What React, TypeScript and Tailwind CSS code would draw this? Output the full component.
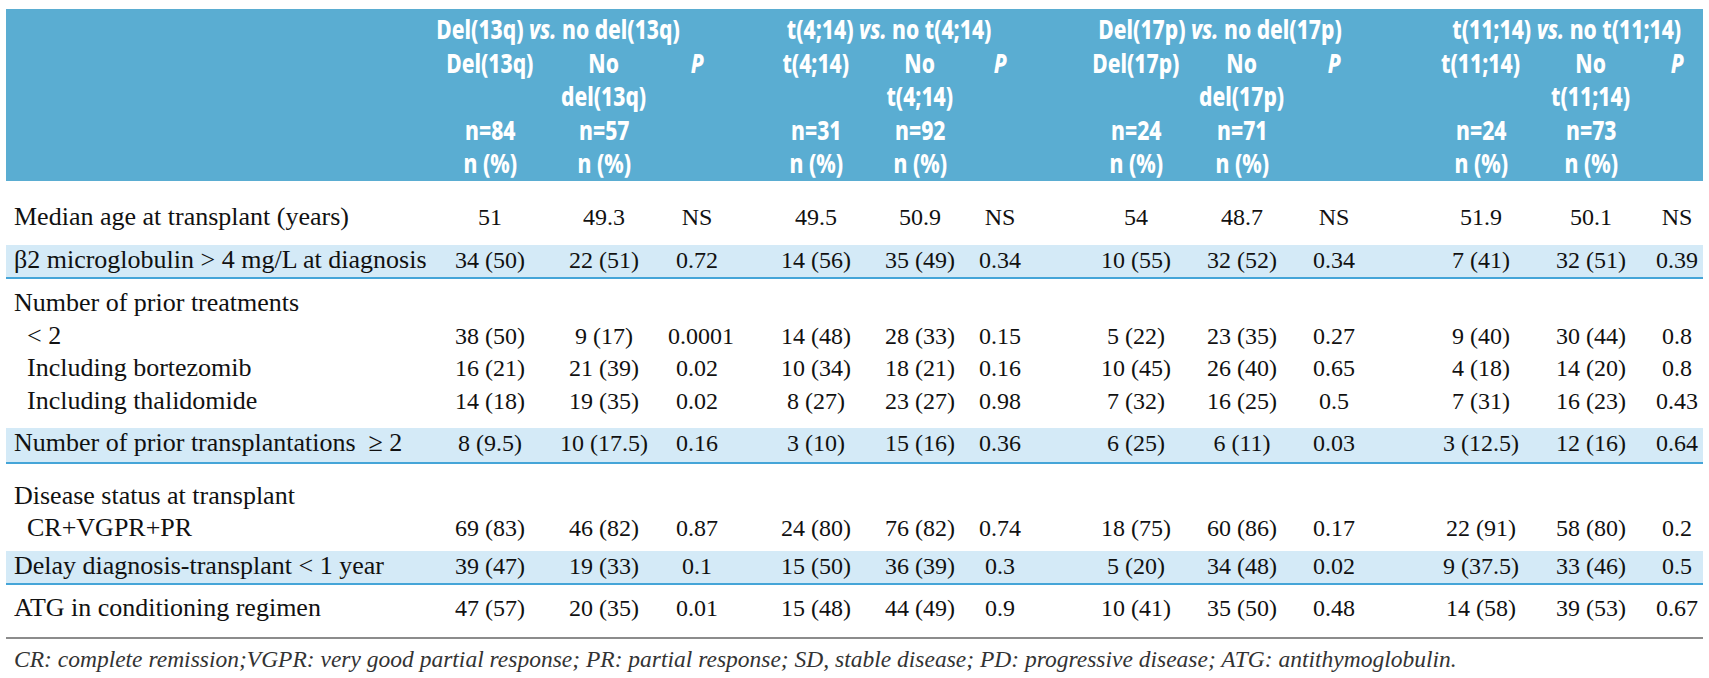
import React from "react";

const cols =
  "grid grid-cols-[434px_100px_128px_58px_40px_100px_108px_52px_60px_100px_112px_72px_61px_100px_120px_52px]";

const groups = [
  { left: "Del(13q)", right: "no del(13q)", a: "Del(13q)", b: "del(13q)", na: "n=84", nb: "n=57", pad: "pr-[50px]" },
  { left: "t(4;14)", right: "no t(4;14)", a: "t(4;14)", b: "t(4;14)", na: "n=31", nb: "n=92", pad: "pr-[14px]" },
  { left: "Del(17p)", right: "no del(17p)", a: "Del(17p)", b: "del(17p)", na: "n=24", nb: "n=71", pad: "pr-[16px]" },
  { left: "t(11;14)", right: "no t(11;14)", a: "t(11;14)", b: "t(11;14)", na: "n=24", nb: "n=73", pad: "pr-0" },
];

type LineProps = { label: string; values?: string[]; indent?: boolean };

function Line({ label, values, indent }: LineProps) {
  return (
    <div className={cols}>
      <div className={indent ? "pl-[21px] text-[26px] whitespace-pre" : "pl-[8px] text-[26px] whitespace-pre"}>
        {label}
      </div>
      {[0, 1, 2, 3].map((g) => (
        <React.Fragment key={g}>
          {g > 0 && <div />}
          {[0, 1, 2].map((i) => (
            <div key={i} className="text-center text-[24px] whitespace-nowrap">
              {values ? values[g * 3 + i] : ""}
            </div>
          ))}
        </React.Fragment>
      ))}
    </div>
  );
}

// narrow bold header text
function H({ children }: { children: React.ReactNode }) {
  return <span className="inline-block whitespace-nowrap scale-x-[0.78]">{children}</span>;
}

function Header() {
  return (
    <div className="bg-[#5aadd2] text-white font-extrabold font-['Noto_Sans',sans-serif] text-[27px] leading-[33.5px] h-[172px] pt-[3px]">
      {/* group titles */}
      <div className={cols}>
        <div />
        {groups.map((g, i) => (
          <React.Fragment key={i}>
            {i > 0 && <div />}
            <div className={`col-span-3 flex justify-center ${g.pad}`}>
              <H>
                {g.left} <i>vs.</i> {g.right}
              </H>
            </div>
          </React.Fragment>
        ))}
      </div>
      {/* sub columns */}
      <div className={cols}>
        <div />
        {groups.map((g, i) => (
          <React.Fragment key={i}>
            {i > 0 && <div />}
            <div className="flex flex-col items-center">
              <H>{g.a}</H>
              <H>&nbsp;</H>
              <H>{g.na}</H>
              <H>n (%)</H>
            </div>
            <div className="flex flex-col items-center">
              <H>No</H>
              <H>{g.b}</H>
              <H>{g.nb}</H>
              <H>n (%)</H>
            </div>
            <div className="flex justify-center italic">
              <H>P</H>
            </div>
          </React.Fragment>
        ))}
      </div>
    </div>
  );
}

export default function App() {
  return (
    <div className="w-[1709px] h-[678px] bg-white pl-[6px] pt-[9px] font-['Liberation_Serif',serif] text-[#111]">
      <div className="w-[1697px]">
        <Header />

        {/* median age */}
        <div className="pt-[20px] pb-[12px] leading-[32px]">
          <Line
            label="Median age at transplant (years)"
            values={["51", "49.3", "NS", "49.5", "50.9", "NS", "54", "48.7", "NS", "51.9", "50.1", "NS"]}
          />
        </div>

        <div className="bg-[#d4eaf7] border-b-2 border-[#45a5d8] pt-[1px] pb-[3px] leading-[28px]">
          <Line
            label="β2 microglobulin > 4 mg/L at diagnosis"
            values={["34 (50)", "22 (51)", "0.72", "14 (56)", "35 (49)", "0.34", "10 (55)", "32 (52)", "0.34", "7 (41)", "32 (51)", "0.39"]}
          />
        </div>

        <div className="pt-[8px] pb-[11px] leading-[32.5px]">
          <Line label="Number of prior treatments" />
          <Line
            indent
            label="< 2"
            values={["38 (50)", "9 (17)", "0.0001", "14 (48)", "28 (33)", "0.15", "5 (22)", "23 (35)", "0.27", "9 (40)", "30 (44)", "0.8"]}
          />
          <Line
            indent
            label="Including bortezomib"
            values={["16 (21)", "21 (39)", "0.02", "10 (34)", "18 (21)", "0.16", "10 (45)", "26 (40)", "0.65", "4 (18)", "14 (20)", "0.8"]}
          />
          <Line
            indent
            label="Including thalidomide"
            values={["14 (18)", "19 (35)", "0.02", "8 (27)", "23 (27)", "0.98", "7 (32)", "16 (25)", "0.5", "7 (31)", "16 (23)", "0.43"]}
          />
        </div>

        <div className="bg-[#d4eaf7] border-b-2 border-[#45a5d8] pt-[1px] pb-[5px] leading-[28px]">
          <Line
            label={"Number of prior transplantations  \u2265 2"}
            values={["8 (9.5)", "10 (17.5)", "0.16", "3 (10)", "15 (16)", "0.36", "6 (25)", "6 (11)", "0.03", "3 (12.5)", "12 (16)", "0.64"]}
          />
        </div>

        <div className="pt-[16px] pb-[7px] leading-[32px]">
          <Line label="Disease status at transplant" />
          <Line
            indent
            label="CR+VGPR+PR"
            values={["69 (83)", "46 (82)", "0.87", "24 (80)", "76 (82)", "0.74", "18 (75)", "60 (86)", "0.17", "22 (91)", "58 (80)", "0.2"]}
          />
        </div>

        <div className="bg-[#d4eaf7] border-b-2 border-[#45a5d8] pt-[1px] pb-[3px] leading-[28px]">
          <Line
            label="Delay diagnosis-transplant < 1 year"
            values={["39 (47)", "19 (33)", "0.1", "15 (50)", "36 (39)", "0.3", "5 (20)", "34 (48)", "0.02", "9 (37.5)", "33 (46)", "0.5"]}
          />
        </div>

        <div className="pt-[7px] pb-[13px] leading-[32px] border-b-2 border-[#8c8c8c]">
          <Line
            label="ATG in conditioning regimen"
            values={["47 (57)", "20 (35)", "0.01", "15 (48)", "44 (49)", "0.9", "10 (41)", "35 (50)", "0.48", "14 (58)", "39 (53)", "0.67"]}
          />
        </div>

        <p className="pl-[8px] pt-[7px] italic text-[23.5px] leading-[26px] text-[#333] whitespace-nowrap">
          CR: complete remission;VGPR: very good partial response; PR: partial response; SD, stable disease; PD: progressive
          disease; ATG: antithymoglobulin.
        </p>
      </div>
    </div>
  );
}
